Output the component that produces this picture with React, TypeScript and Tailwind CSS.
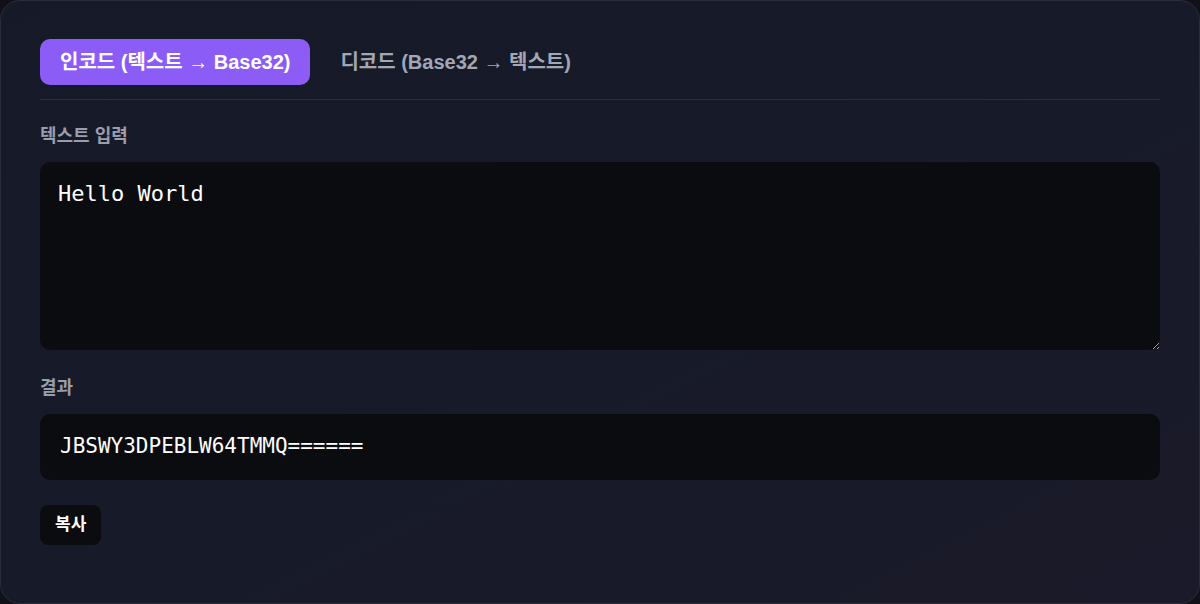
import React, { useState } from 'react';

const sans = "font-['Liberation_Sans','Noto_Sans_CJK_KR',sans-serif]";
const mono = "font-['DejaVu_Sans_Mono','Noto_Sans_CJK_KR',monospace]";

type Mode = 'encode' | 'decode';

const TabButton: React.FC<{
  label: string;
  active: boolean;
  onClick: () => void;
}> = ({ label, active, onClick }) => (
  <button
    onClick={onClick}
    className={`h-[46px] px-5 rounded-[10px] text-[20px] font-bold ${
      active
        ? 'bg-gradient-to-r from-[#8b5cf6] to-[#8c5cf5] text-white'
        : 'text-[#a3a6b4]'
    }`}
  >
    {label}
  </button>
);

const App: React.FC = () => {
  const [mode, setMode] = useState<Mode>('encode');
  const [input, setInput] = useState('Hello World');

  return (
    <div className={`w-[1200px] h-[604px] bg-[#101119] ${sans}`}>
      <div className="h-full rounded-[20px] border border-[#2a2c3a] bg-gradient-to-br from-[#161a28] via-[#171b29] to-[#1b1a2a] px-[39px] pt-[38px]">
        <div className="flex items-center gap-[10px] pb-[14px] border-b border-[#2b2f3d]">
          <TabButton
            label="인코드 (텍스트 → Base32)"
            active={mode === 'encode'}
            onClick={() => setMode('encode')}
          />
          <TabButton
            label="디코드 (Base32 → 텍스트)"
            active={mode === 'decode'}
            onClick={() => setMode('decode')}
          />
        </div>

        <div className="mt-[23px] text-[18px] font-bold text-[#9a9daa]">텍스트 입력</div>
        <textarea
          value={input}
          onChange={(e) => setInput(e.target.value)}
          className={`mt-[12px] block w-full h-[188px] rounded-[10px] bg-[#0b0c10] text-white px-[18px] pt-[15px] pb-[17px] text-[22px] outline-none ${mono}`}
        />

        <div className="mt-[25px] text-[18px] font-bold text-[#9a9daa]">결과</div>
        <div
          className={`mt-[12px] h-[66px] flex items-center rounded-[10px] bg-[#0b0c10] text-white px-[20px] text-[21px] ${mono}`}
        >
          JBSWY3DPEBLW64TMMQ======
        </div>

        <button className="mt-[25px] h-[40px] px-[15px] rounded-[8px] bg-[#0b0c10] text-white text-[17px] font-bold">
          복사
        </button>
      </div>
    </div>
  );
};

export default App;
